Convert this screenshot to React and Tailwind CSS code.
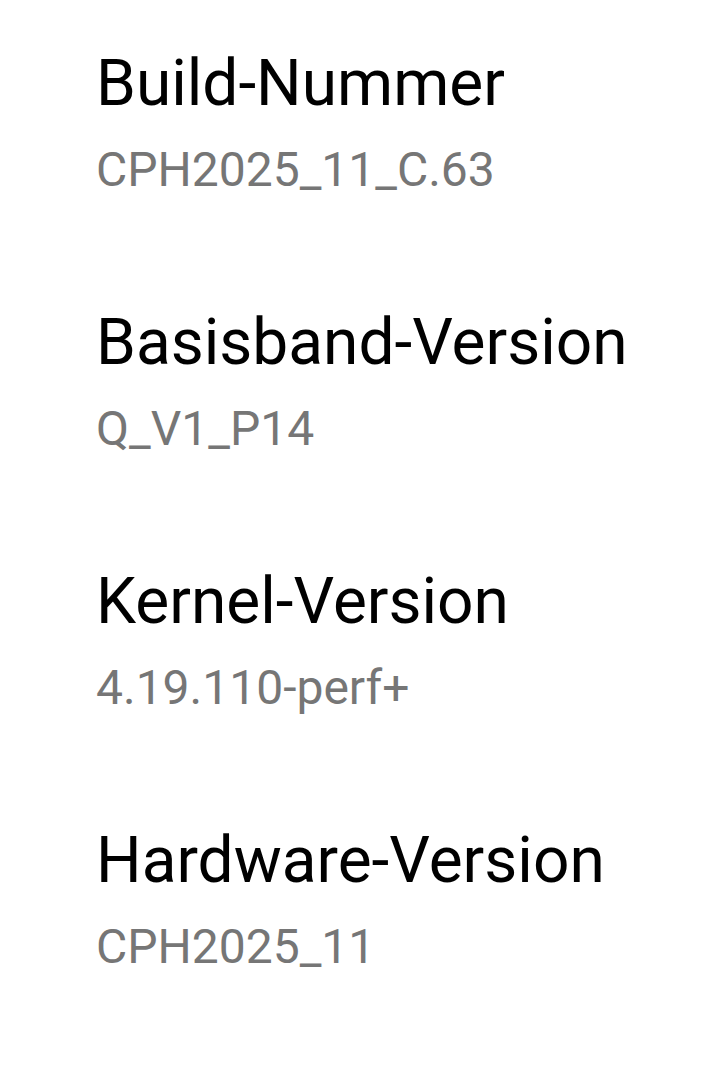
import React from 'react';

const rows = [
  { title: 'Build-Nummer', value: 'CPH2025_11_C.63' },
  { title: 'Basisband-Version', value: 'Q_V1_P14' },
  { title: 'Kernel-Version', value: '4.19.110-perf+' },
  { title: 'Hardware-Version', value: 'CPH2025_11' },
];

export default function App() {
  return (
    <div className="w-[708px] h-[1076px] bg-white overflow-hidden font-['Roboto',sans-serif]">
      <div className="flex flex-col pt-[46px] pl-[96px]">
        {rows.map((r) => (
          <div key={r.title} className="h-[259px] flex flex-col gap-[19px]">
            <div className="text-[64px] leading-[76px] text-black">{r.title}</div>
            <div className="text-[48px] leading-[58px] text-[#767676]">{r.value}</div>
          </div>
        ))}
      </div>
    </div>
  );
}
